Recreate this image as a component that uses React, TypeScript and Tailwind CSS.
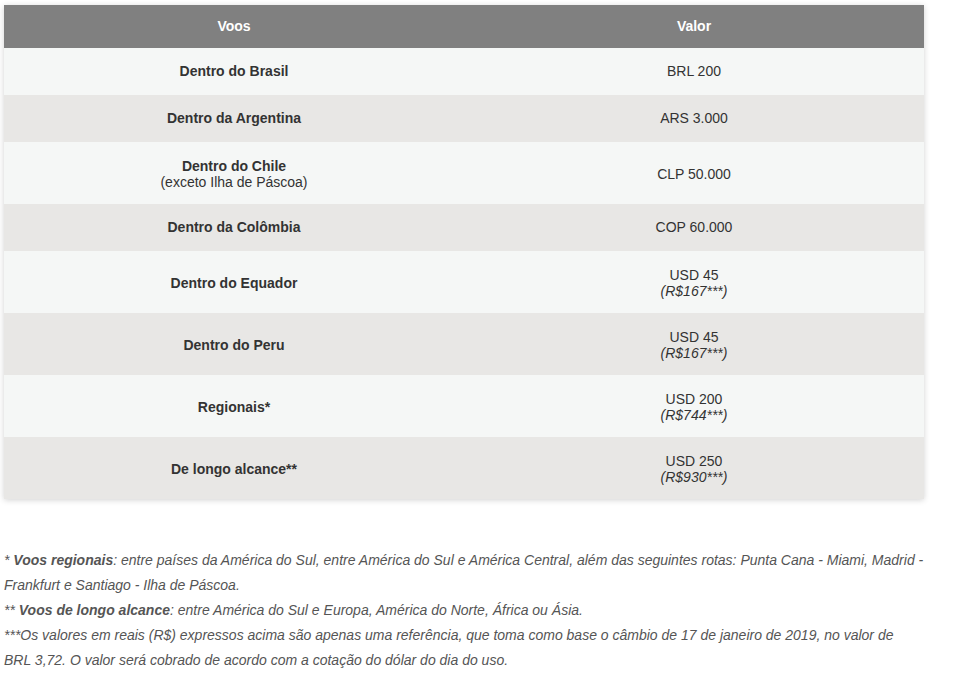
import React from "react";

type Row = {
  place: string;
  placeNote?: string;
  value: string;
  valueNote?: string;
};

const ROWS: Row[] = [
  { place: "Dentro do Brasil", value: "BRL 200" },
  { place: "Dentro da Argentina", value: "ARS 3.000" },
  { place: "Dentro do Chile", placeNote: "(exceto Ilha de Páscoa)", value: "CLP 50.000" },
  { place: "Dentro da Colômbia", value: "COP 60.000" },
  { place: "Dentro do Equador", value: "USD 45", valueNote: "(R$167***)" },
  { place: "Dentro do Peru", value: "USD 45", valueNote: "(R$167***)" },
  { place: "Regionais*", value: "USD 200", valueNote: "(R$744***)" },
  { place: "De longo alcance**", value: "USD 250", valueNote: "(R$930***)" },
];

export default function App() {
  return (
    <div className="min-h-[694px] bg-white pt-[5px] pl-[4px] pr-[36px] text-[14px] text-[#333] [font-family:'Liberation_Sans',Arial,sans-serif]">
      <div className="w-[920px] shadow-[0_1px_6px_rgba(0,0,0,0.18)]">
        <div className="grid grid-cols-2 bg-[#808080] font-bold leading-[16px] text-white">
          <div className="flex h-[43px] items-center justify-center pb-[2px]">Voos</div>
          <div className="flex h-[43px] items-center justify-center pb-[2px]">Valor</div>
        </div>
        {ROWS.map((r, i) => {
          const tall = !!(r.placeNote || r.valueNote);
          return (
            <div
              key={r.place}
              className={`grid grid-cols-2 leading-[16px] ${i % 2 === 0 ? "bg-[#f5f7f6]" : "bg-[#e8e7e5]"} ${tall ? "h-[62px] pt-[1px]" : "h-[47px] pb-[2px]"}`}
            >
              <div className="flex flex-col items-center justify-center text-center">
                <span className="font-bold">{r.place}</span>
                {r.placeNote && <span>{r.placeNote}</span>}
              </div>
              <div className="flex flex-col items-center justify-center text-center">
                <span>{r.value}</span>
                {r.valueNote && <span className="italic">{r.valueNote}</span>}
              </div>
            </div>
          );
        })}
      </div>

      <div className="mt-[49px] text-[14px] italic leading-[25px] text-[#555]">
        <p>
          * <b>Voos regionais</b>: entre países da América do Sul, entre América do Sul e América Central, além das
          seguintes rotas: Punta Cana - Miami, Madrid - Frankfurt e Santiago - Ilha de Páscoa.
        </p>
        <p>
          ** <b>Voos de longo alcance</b>: entre América do Sul e Europa, América do Norte, África ou Ásia.
        </p>
        <p>
          ***Os valores em reais (R$) expressos acima são apenas uma referência, que toma como base o câmbio de 17 de
          janeiro de 2019, no valor de BRL 3,72. O valor será cobrado de acordo com a cotação do dólar do dia do uso.
        </p>
      </div>
    </div>
  );
}
